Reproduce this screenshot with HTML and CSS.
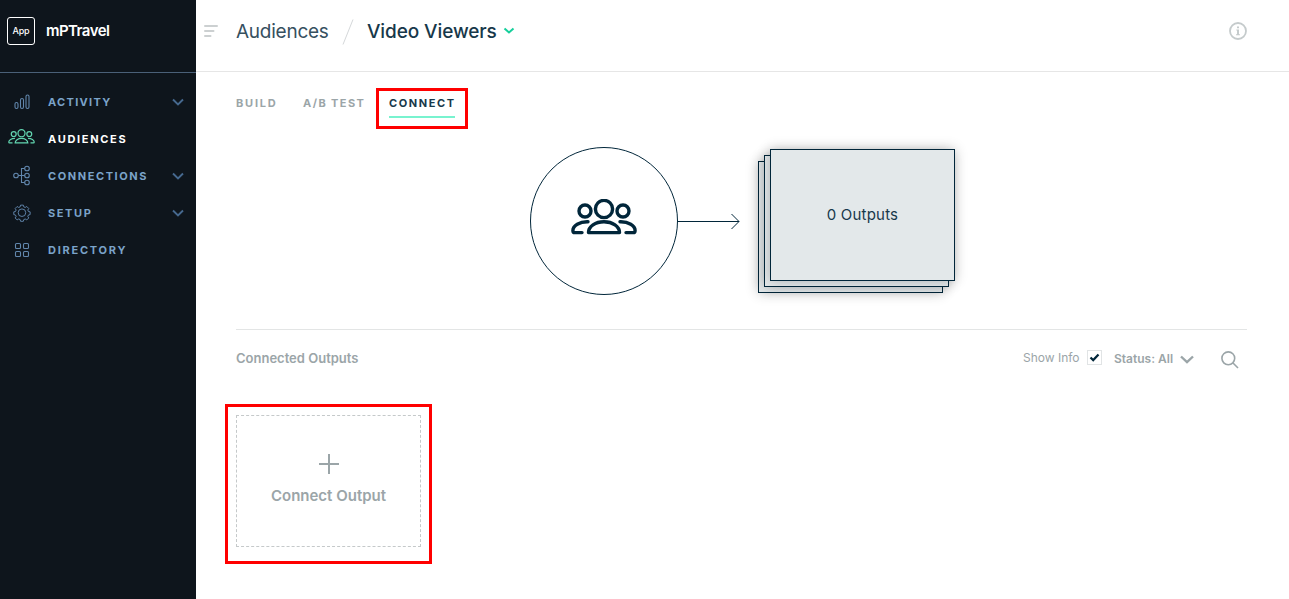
FILE: index.html
```html
<!DOCTYPE html>
<html lang="en">
<head>
<meta charset="utf-8">
<title>Video Viewers</title>
<link rel="stylesheet" href="styles.css">
</head>
<body>
<svg class="defs" width="0" height="0">
  <symbol id="people" viewBox="0 0 66 36">
    <circle cx="33" cy="10" r="8.6"/>
    <circle cx="14" cy="12" r="6"/>
    <circle cx="52" cy="12" r="6"/>
    <path d="M17.500 33.600C17.500 27.400 24.400 22.800 33 22.800s15.500 4.600 15.500 10.800z"/>
    <path d="M17 22.700C8.500 22.400 1.900 26.800 1.900 31.400c0 1.500.4 2.200 2 2.200H11"/>
    <path d="M49 22.700c8.500-.3 15.100 4.100 15.100 8.700 0 1.500-.4 2.200-2 2.200H55"/>
  </symbol>
</svg>
<div class="app">
  <aside class="sidebar">
    <div class="brand"><span class="logo">App</span><span class="brand-name">mPTravel</span></div>
    <nav class="nav">
      <a class="item"><svg class="ico" viewBox="0 0 28 20"><rect x="9" y="10.500" width="3" height="6" rx="1.500"/><rect x="14.500" y="6.500" width="3" height="10" rx="1.500"/><rect x="20" y="3" width="3" height="13.500" rx="1.500"/></svg><span class="label activity">ACTIVITY</span><svg class="chev" viewBox="0 0 12 8"><path d="M1 1.500l5 5 5-5"/></svg></a>
      <a class="item active"><svg class="ico people"><use href="#people"/></svg><span class="label audiences">AUDIENCES</span></a>
      <a class="item"><svg class="ico" viewBox="0 0 28 20"><circle cx="10" cy="9.500" r="2.300"/><circle cx="21" cy="2.500" r="2.300"/><circle cx="21" cy="9.500" r="2.300"/><circle cx="21" cy="16.500" r="2.300"/><path d="M12.300 9.500h6.400M18.700 2.500H15.500v14h3.200"/></svg><span class="label connections">CONNECTIONS</span><svg class="chev" viewBox="0 0 12 8"><path d="M1 1.500l5 5 5-5"/></svg></a>
      <a class="item"><svg class="ico" viewBox="0 0 28 20"><g transform="translate(2.200 1.100) scale(.86)"><circle cx="16" cy="10" r="4.400"/><path d="M14.400 1.200h3.200l.5 2 1.700.7 1.800-1.100 2.300 2.300-1.100 1.800.7 1.700 2 .4v3.200l-2 .5-.7 1.600 1.100 1.800-2.300 2.300-1.800-1.100-1.700.7-.5 2h-3.200l-.5-2-1.700-.7-1.800 1.100-2.300-2.300 1.100-1.800-.7-1.600-2-.5V9l2-.4.7-1.700-1.100-1.800 2.300-2.300 1.800 1.100 1.700-.7z"/></g></svg><span class="label setup">SETUP</span><svg class="chev" viewBox="0 0 12 8"><path d="M1 1.500l5 5 5-5"/></svg></a>
      <a class="item"><svg class="ico" viewBox="0 0 28 20"><rect x="9.500" y="3.500" width="5" height="5" rx="1"/><rect x="17.500" y="3.500" width="5" height="5" rx="1"/><rect x="9.500" y="11.500" width="5" height="5" rx="1"/><rect x="17.500" y="11.500" width="5" height="5" rx="1"/></svg><span class="label directory">DIRECTORY</span></a>
    </nav>
  </aside>
  <main class="main">
    <header class="header">
      <svg class="menu" width="14" height="12" viewBox="0 0 14 12"><path d="M1 1h12M1 6h8.500M1 11h5.500"/></svg>
      <span class="crumb">Audiences</span>
      <svg class="slash" width="12" height="26" viewBox="0 0 12 26"><path d="M1 25.500L11 .5"/></svg>
      <span class="title">Video Viewers</span>
      <svg class="title-chev" width="12" height="8" viewBox="0 0 12 8"><path d="M1.500 1.500l4.500 4 4.500-4"/></svg>
      <svg class="info" width="18" height="18" viewBox="0 0 18 18"><circle cx="9" cy="9" r="8"/><path d="M8 4.500h2v1.800H8zM7.300 7.600H10v4.700h1v1H7v-1h1V8.600h-.7z"/></svg>
    </header>
    <div class="content">
      <div class="tabs">
        <span class="tab build">BUILD</span><span class="tab test">A/B TEST</span>
        <div class="mark-tab"><span class="tab current">CONNECT</span></div>
      </div>
      <section class="flow">
        <div class="circle"><svg width="66" height="36"><use href="#people"/></svg></div>
        <svg class="arrow" width="62" height="16" viewBox="0 0 62 16"><path d="M0 8.500h61M53.500 1l7.500 7.500-7.500 7.500"/></svg>
        <div class="stack"><div class="sheet back"></div><div class="sheet middle"></div><div class="sheet front"><span class="output-count">0 Outputs</span></div></div>
      </section>
      <div class="toolbar">
        <h2 class="subtitle">Connected Outputs</h2>
        <span class="show">Show Info</span>
        <span class="check"><svg width="11" height="9" viewBox="0 0 11 9"><path d="M1.500 4.500l2.700 2.600L9.500 1.500"/></svg></span>
        <span class="status">Status: All</span>
        <svg class="status-chev" width="14" height="9" viewBox="0 0 14 9"><path d="M1 1.500l6 5.700 6-5.700"/></svg>
        <svg class="search" width="18" height="18" viewBox="0 0 18 18"><circle cx="7.300" cy="7.300" r="6.400"/><path d="M12 12l5 5"/></svg>
      </div>
      <div class="mark-card">
        <div class="connect-card"><svg width="20" height="20" viewBox="0 0 20 20"><path d="M10 0v20M0 10h20"/></svg><span class="connect-label">Connect Output</span></div>
      </div>
    </div>
  </main>
</div>
</body>
</html>
```

FILE: styles.css
```css
* { box-sizing: border-box; }
body { margin: 0; font-family: Inter, "Liberation Sans", sans-serif; background: #fff; color: #01263a; }
svg { display: block; flex: none; fill: none; stroke: currentColor; overflow: visible; }
.defs { position: absolute; }
.app { display: flex; width: 1289px; height: 599px; overflow: hidden; }
span { white-space: nowrap; }

.sidebar { width: 196px; flex: none; background: #0e151c; }
.brand { height: 73px; border-bottom: 1px solid #4a6078; display: flex; align-items: flex-start; padding: 17px 0 0 7px; color: #fff; }
.logo { width: 28px; height: 28px; border: 1px solid #fff; border-radius: 3px; font-size: 9px; font-weight: 500; line-height: 25px; text-align: center; letter-spacing: -.2px; }
.brand-name { margin-left: 11px; font-size: 15px; font-weight: 600; line-height: 28px; letter-spacing: -.55px; }
.nav { padding-top: 10px; }
.item { height: 37px; display: flex; align-items: center; padding: 0 12px 0 6px; color: #7ba3c9; }
.ico { width: 28px; height: 20px; margin-right: 14px; color: #6186ac; stroke-width: 1.100; }
.ico.people { width: 27px; height: 15px; margin: 0 13px 4px 2px; color: #62d5b0; stroke-width: 3; }
.label { font-size: 11px; font-weight: 700; letter-spacing: 1.300px; line-height: 20px; flex: 1; }
.audiences { letter-spacing: 1.680px; }
.connections { letter-spacing: 1.580px; }
.setup { letter-spacing: 1.600px; }
.directory { letter-spacing: 1.750px; }
.active { color: #fff; }
.chev { width: 12px; height: 8px; color: #46698f; stroke-width: 1.900; }

.main { flex: 1; }
.header { height: 72px; border-bottom: 1px solid #e6e6e6; display: flex; padding: 0 42px 0 8px; }
.menu { margin-top: 25px; color: #ccd0d1; stroke-width: 2; stroke-linecap: round; }
.crumb, .title { font-size: 19px; line-height: 64px; }
.crumb { margin-left: 18px; width: 106px; color: #36505f; letter-spacing: -.25px; }
.slash { margin-top: 19px; color: #d5d8da; }
.title { margin-left: 13px; width: 136px; color: #17384a; font-weight: 500; letter-spacing: -.1px; }
.title-chev { margin-top: 27px; color: #15cf9b; stroke-width: 2; }
.info { margin: 22px 0 0 auto; color: #c5cbcc; stroke-width: 1.800; }
.info path { fill: currentColor; stroke: none; }

.content { padding: 16px 42px 0 40px; }
.tabs { display: flex; height: 41px; }
.tab { font-size: 11px; font-weight: 700; letter-spacing: 1.500px; line-height: 31px; color: #9ba5a8; }
.build { width: 67px; letter-spacing: 1.800px; }
.test { width: 73px; letter-spacing: 1.400px; }
.mark-tab { width: 92px; height: 41px; border: 3px solid #f00; padding: 5px 10px; }
.current { display: block; height: 22px; line-height: 14px; color: #17384a; border-bottom: 2px solid #78f3cf; letter-spacing: 1.600px; }

.flow { height: 201px; border-bottom: 1px solid #e3e5e5; display: flex; padding: 18px 0 0 294px; }
.circle { width: 148px; height: 148px; flex: none; border: 1px solid #01263a; border-radius: 50%; display: flex; justify-content: center; padding-top: 51px; color: #01263a; stroke-width: 3.400; stroke-linejoin: round; stroke-linecap: round; }
.arrow { margin-top: 66px; color: #01263a; }
.stack { display: grid; margin: 2px 0 0 18px; width: 197px; height: 144px; }
.sheet { grid-area: 1 / 1; width: 185px; height: 132px; border: 1px solid #01263a; background: #e3e8ea; box-shadow: 0 0 12px rgba(0,0,0,.24); }
.back { margin: 12px 0 0; }
.middle { margin: 6px 0 0 6px; }
.front { margin-left: 12px; text-align: center; line-height: 129px; font-size: 15px; color: #17384a; letter-spacing: .2px; }

.toolbar { display: flex; height: 74px; color: #9ba5a8; }
.subtitle { margin: 0 auto 0 0; font-size: 13px; font-weight: 600; line-height: 57px; }
.show { width: 64px; font-size: 12px; line-height: 56px; }
.check { width: 15px; height: 15px; margin: 20px 12px 0 0; border: 1px solid #e1e4e5; display: flex; align-items: center; justify-content: center; color: #01263a; stroke-width: 2.200; }
.status { width: 66px; font-size: 12px; font-weight: 600; line-height: 58px; }
.status-chev { margin-top: 25px; stroke-width: 2.400; }
.search { margin: 21px 8px 0 27px; stroke-width: 1.600; }
.mark-card { width: 207px; height: 160px; margin-left: -11px; border: 3px solid #f00; padding: 8px; }
.connect-card { width: 185px; height: 132px; border: 1px dashed #c5c9ca; display: flex; flex-direction: column; align-items: center; padding-top: 38px; color: #9ba5a8; }
.connect-card svg { stroke-width: 2; }
.connect-label { font-size: 15px; font-weight: 600; margin-top: 12px; line-height: 20px; }
```
